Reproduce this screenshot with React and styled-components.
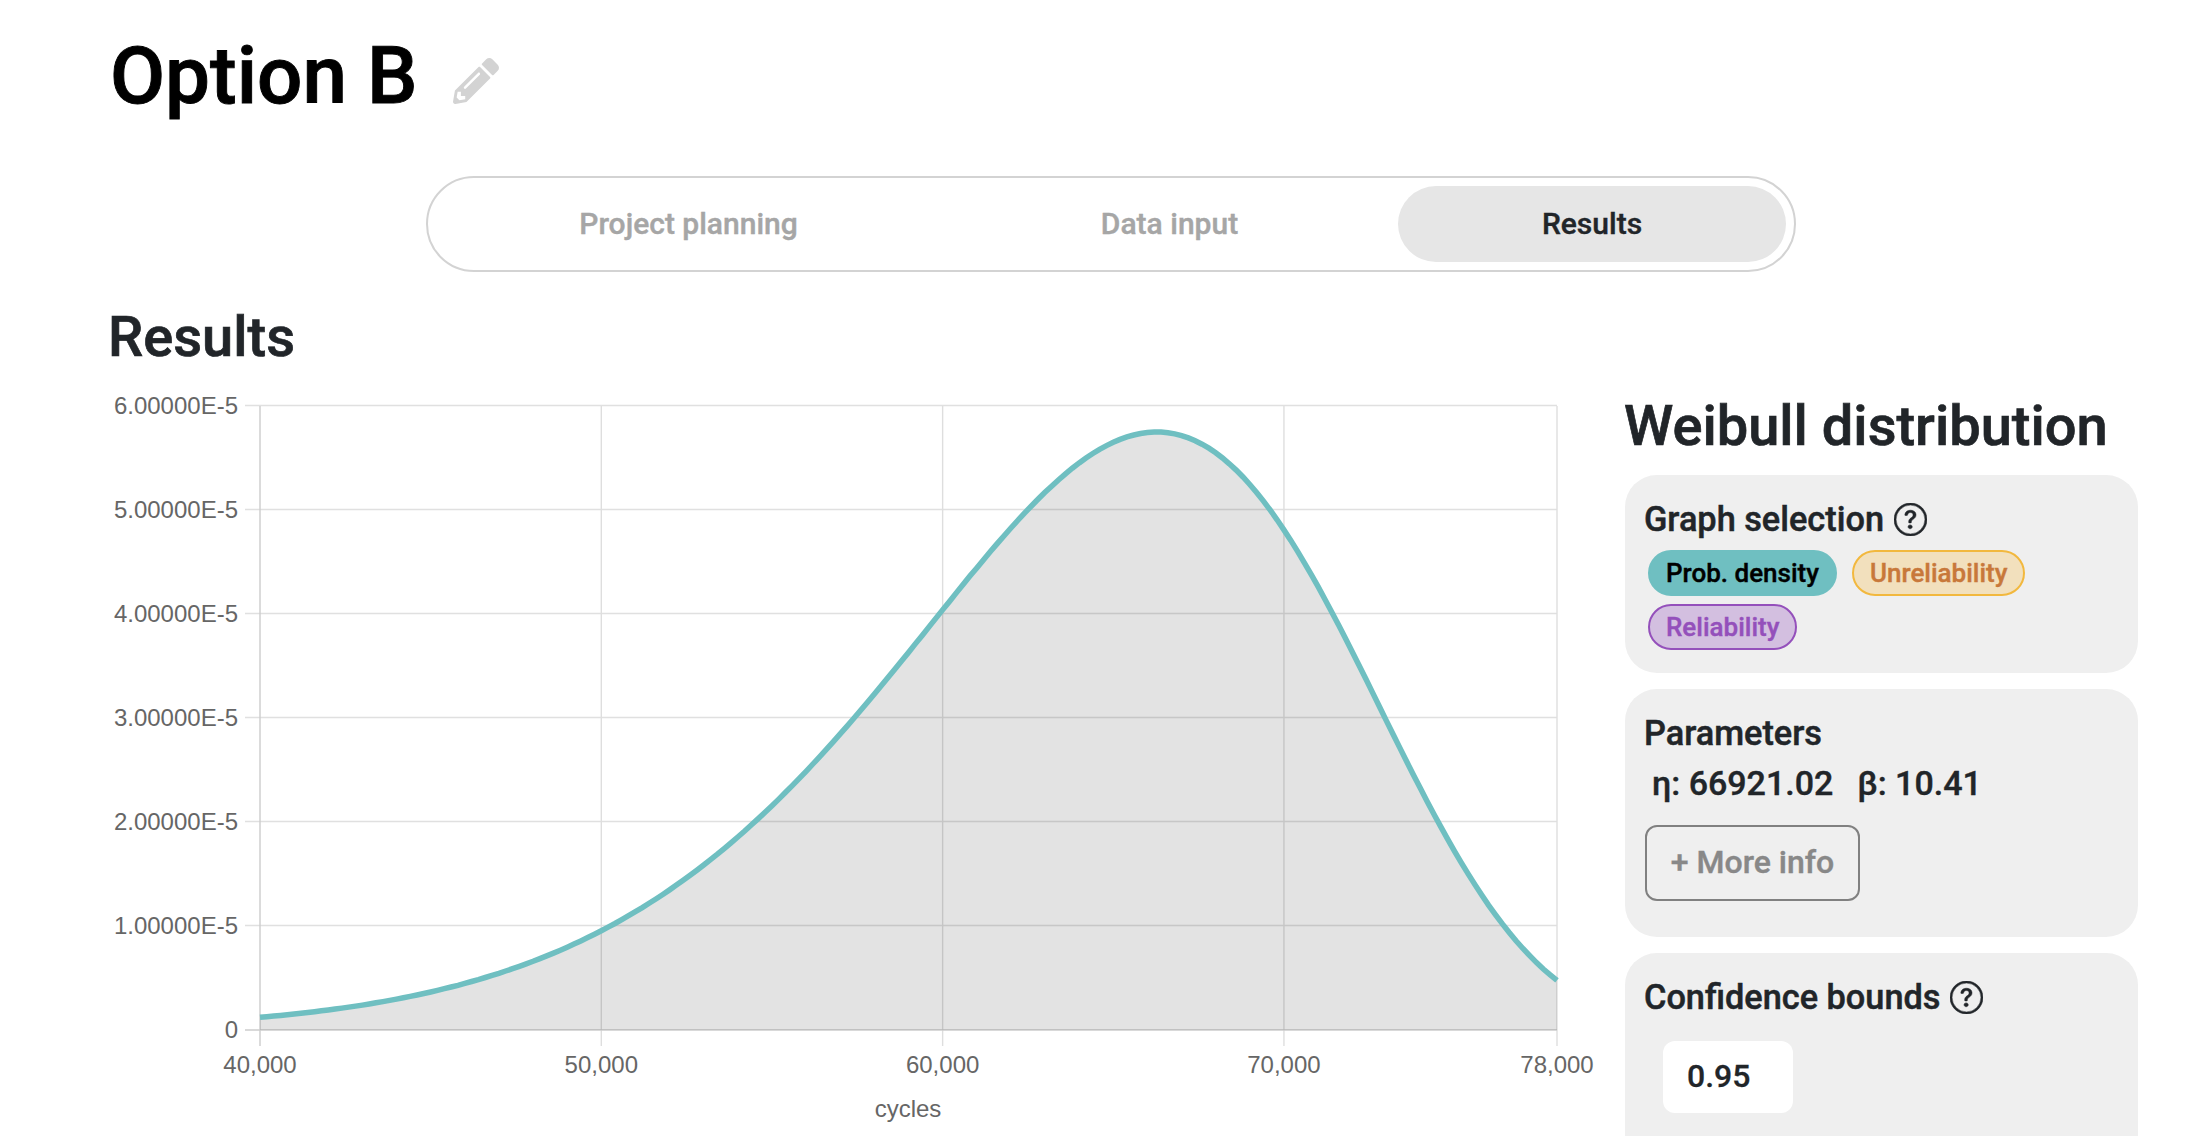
import React from 'react';
import styled, { createGlobalStyle } from 'styled-components';
import { FaPencilAlt } from 'react-icons/fa';
import { BsQuestionCircle } from 'react-icons/bs';

const Global = createGlobalStyle`
  html, body { margin: 0; padding: 0; background: #fff; }
  body { font-family: Roboto, "Liberation Sans", sans-serif; color: #212529; }
`;

const Page = styled.div`
  height: 1136px;
  overflow: hidden;
  padding-left: 108px;
  box-sizing: border-box;
`;
const TitleRow = styled.header`
  display: flex;
  align-items: center;
  gap: 36px;
  height: 150px;
  padding-top: 2px;
  box-sizing: border-box;
`;
const Title = styled.h1`
  margin: 0 0 0 2px;
  font-size: 80px;
  font-weight: 500;
  line-height: 1;
  color: #000;
  -webkit-text-stroke: 0.9px #000;
`;
const EditIcon = styled(FaPencilAlt)`
  color: #d3d3d3;
  width: 46px;
  height: 46px;
  margin-top: 10px;
`;
const Tabs = styled.nav`
  display: grid;
  grid-template-columns: 505px 457px 388px;
  width: 1370px;
  height: 96px;
  margin: 26px 0 0 318px;
  padding: 8px;
  box-sizing: border-box;
  border: 2px solid #d3d3d3;
  border-radius: 48px;
`;
const Tab = styled.div`
  display: flex;
  align-items: center;
  justify-content: center;
  border-radius: 38px;
  font-size: 30px;
  font-weight: 500;
  padding-bottom: 2px;
  box-sizing: border-box;
  color: ${p => (p.$active ? '#212529' : '#a6a6a6')};
  background: ${p => (p.$active ? '#e6e6e6' : 'transparent')};
  -webkit-text-stroke: 0.4px currentColor;
`;
const Body = styled.div`
  display: flex;
  align-items: flex-start;
  margin-top: 32px;
`;
const Left = styled.section`
  width: 1517px;
  flex: none;
`;
const Heading = styled.h2`
  margin: 0;
  font-size: 56px;
  font-weight: 500;
  line-height: 66px;
  color: #212529;
  -webkit-text-stroke: 0.7px #212529;
`;
const ChartSvg = styled.svg`
  display: block;
  margin-top: 20px;
`;
const Side = styled.aside`
  width: 513px;
  flex: none;
  margin-top: 90px;
  display: flex;
  flex-direction: column;
  gap: 16px;
`;
const SideHeading = styled(Heading)`
  margin: -1px 0 0 -1px;
`;
const Card = styled.div`
  background: #efefef;
  border-radius: 32px;
  padding: 24px 20px 20px 19px;
  box-sizing: border-box;
  min-height: ${p => p.$h}px;
`;
const CardTitle = styled.div`
  display: flex;
  align-items: center;
  gap: 10px;
  font-size: 34.3px;
  font-weight: 500;
  line-height: 40px;
  color: #212529;
  -webkit-text-stroke: 0.5px #212529;
`;
const Help = styled(BsQuestionCircle)`
  width: 33px;
  height: 33px;
  color: #212529;
  stroke: #212529;
  stroke-width: 0.25px;
`;
const Chips = styled.div`
  display: flex;
  flex-wrap: wrap;
  gap: 8px 15px;
  margin: 11px 0 0 4px;
`;
const Chip = styled.span`
  display: inline-flex;
  align-items: center;
  height: 46px;
  padding: 0 16px;
  box-sizing: border-box;
  border-radius: 23px;
  border: 2px solid ${p => p.$line};
  background: ${p => p.$bg};
  color: ${p => p.$fg};
  font-size: 26px;
  font-weight: 500;
  -webkit-text-stroke: 0.4px ${p => p.$fg};
`;
const Params = styled.div`
  display: flex;
  gap: 24px;
  margin: 8px 0 0 8px;
  font-size: 34px;
  font-weight: 500;
  line-height: 44px;
  -webkit-text-stroke: 0.4px #212529;
`;
const MoreButton = styled.button`
  display: block;
  width: 215px;
  height: 76px;
  margin: 20px 0 0 1px;
  padding: 0 0 2px;
  box-sizing: border-box;
  border: 2px solid #808080;
  border-radius: 12px;
  background: transparent;
  color: #888;
  font-family: inherit;
  font-size: 32px;
  font-weight: 500;
  -webkit-text-stroke: 0.4px #888;
`;
const ValueBox = styled.div`
  display: flex;
  align-items: center;
  width: 130px;
  height: 72px;
  margin: 24px 0 0 19px;
  padding: 0 0 2px 24px;
  box-sizing: border-box;
  background: #fff;
  border-radius: 12px;
  font-size: 32px;
  font-weight: 500;
  -webkit-text-stroke: 0.3px #212529;
`;

/* chart geometry: absolute page px mapped into the svg */
const X0 = 152, X1 = 1449, Y0 = 624 + 16, YT = 16;
const W = 1517, H = 760;
const sx = c => X0 + ((c - 40000) / 38000) * (X1 - X0);
const sy = v => Y0 - (v / 6e-5) * (Y0 - YT);
const eta = 66921.02, beta = 10.41;
const pdf = x => (beta / eta) * Math.pow(x / eta, beta - 1) * Math.exp(-Math.pow(x / eta, beta));

const points = [];
for (let c = 40000; c <= 78000; c += 200) points.push(`${sx(c).toFixed(1)},${sy(pdf(c)).toFixed(1)}`);
const linePath = 'M' + points.join('L');
const areaPath = `${linePath}L${X1},${Y0}L${X0},${Y0}Z`;
const yTicks = [6, 5, 4, 3, 2, 1];
const xTicks = [[40000, '40,000'], [50000, '50,000'], [60000, '60,000'], [70000, '70,000'], [78000, '78,000']];

const Chart = () => (
  <ChartSvg width={W} height={H} viewBox={`0 0 ${W} ${H}`}>
    {yTicks.map(t => (
      <g key={t}>
        <line x1={X0 - 15} x2={X1} y1={sy(t * 1e-5) - 0.5} y2={sy(t * 1e-5) - 0.5} stroke="#e0e0e0" strokeWidth="1.4" />
        <text x={X0 - 22} y={sy(t * 1e-5) + 8} textAnchor="end" fontFamily="Liberation Sans" fontSize="24" fill="#666">{`${t}.00000E-5`}</text>
      </g>
    ))}
    <text x={X0 - 22} y={Y0 + 8} textAnchor="end" fontFamily="Liberation Sans" fontSize="24" fill="#666">0</text>
    {xTicks.map(([c, l]) => (
      <g key={c}>
        <line x1={sx(c)} x2={sx(c)} y1={YT} y2={Y0 + 16} stroke={c === 40000 ? '#cccccc' : '#dedede'} strokeWidth="1.4" />
        <text x={sx(c)} y={Y0 + 43} textAnchor="middle" fontFamily="Liberation Sans" fontSize="24" fill="#666">{l}</text>
      </g>
    ))}
    <line x1={X0 - 15} x2={X1} y1={Y0} y2={Y0} stroke="#cccccc" strokeWidth="1.6" />
    <path d={areaPath} fill="rgba(0,0,0,0.11)" />
    <path d={linePath} fill="none" stroke="#6fbfc1" strokeWidth="5.5" />
    <text x={800} y={Y0 + 87} textAnchor="middle" fontFamily="Liberation Sans" fontSize="24" fill="#666">cycles</text>
  </ChartSvg>
);

export default function App() {
  return (
    <Page>
      <Global />
      <TitleRow>
        <Title>Option B</Title>
        <EditIcon />
      </TitleRow>
      <Tabs>
        <Tab>Project planning</Tab>
        <Tab>Data input</Tab>
        <Tab $active>Results</Tab>
      </Tabs>
      <Body>
        <Left>
          <Heading>Results</Heading>
          <Chart />
        </Left>
        <Side>
          <SideHeading>Weibull distribution</SideHeading>
          <Card $h={198}>
            <CardTitle>Graph selection <Help /></CardTitle>
            <Chips>
              <Chip $bg="#6fbfc1" $line="#6fbfc1" $fg="#000">Prob. density</Chip>
              <Chip $bg="#f2e0bd" $line="#f2b83e" $fg="#c8783a">Unreliability</Chip>
              <Chip $bg="#d3bfe0" $line="#9450bb" $fg="#9450bb">Reliability</Chip>
            </Chips>
          </Card>
          <Card $h={248}>
            <CardTitle>Parameters</CardTitle>
            <Params><span>η: 66921.02</span><span>β: 10.41</span></Params>
            <MoreButton>+ More info</MoreButton>
          </Card>
          <Card $h={260}>
            <CardTitle>Confidence bounds <Help /></CardTitle>
            <ValueBox>0.95</ValueBox>
          </Card>
        </Side>
      </Body>
    </Page>
  );
}
